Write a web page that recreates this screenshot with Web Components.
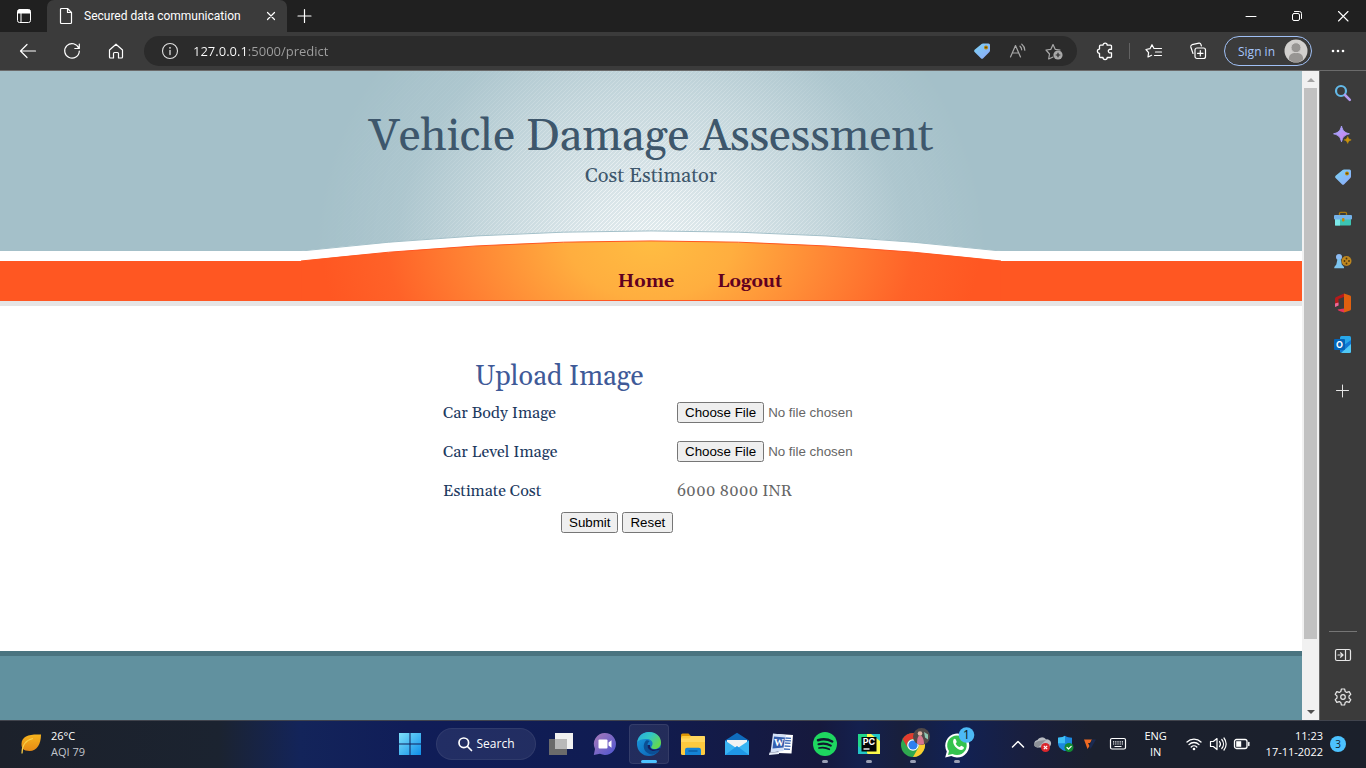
<!DOCTYPE html>
<html lang="en">
<head>
<meta charset="utf-8">
<meta name="viewport" content="width=device-width, initial-scale=1">
<title>Secured data communication</title>
<style>
  html, body { margin: 0; height: 100%; }
  body { overflow: hidden; font-family: "Noto Sans", "Open Sans", sans-serif; }
</style>
</head>
<body>
<desktop-shell>
  <edge-browser>
    <tab-strip slot="tabs" label="Secured data communication"></tab-strip>
    <browser-toolbar slot="toolbar"></browser-toolbar>
    <web-viewport slot="page">
      <site-header heading="Vehicle Damage Assessment" tagline="Cost Estimator">
        <nav-link href="#home">Home</nav-link>
        <nav-link href="#logout">Logout</nav-link>
      </site-header>
      <upload-form></upload-form>
      <site-footer></site-footer>
    </web-viewport>
    <side-bar slot="side"></side-bar>
  </edge-browser>
  <task-bar></task-bar>
</desktop-shell>

<script>
const line = 'fill="none" stroke="currentColor" stroke-linecap="round" stroke-linejoin="round"';

/* name: [width, height, markup] */
const ICONS = {
  tabs: [16, 16, `<g ${line}><rect x="1.5" y="1.5" width="13" height="13" rx="2"/><path d="M5 5v9"/></g><path d="M1.5 3.5a2 2 0 0 1 2-2h9a2 2 0 0 1 2 2V5.500h-13z" fill="currentColor"/>`],
  doc: [14, 18, `<g ${line} stroke-width="1.2"><path d="M1.500 2.500a1 1 0 0 1 1-1H8.500l4 4v10a1 1 0 0 1-1 1h-9a1 1 0 0 1-1-1z"/><path d="M8.500 1.500v4h4"/></g>`],
  close: [12, 12, `<path d="M2.500 2.500l7 7M9.500 2.500l-7 7" ${line} stroke-width="1.2"/>`],
  plus: [16, 16, `<path d="M7.500 1.500v13M1 8h13" ${line} stroke-width="1.2"/>`],
  plusThin: [14, 14, `<path d="M6.500 1v12M.5 6.500h12" ${line}/>`],
  min: [12, 12, `<path d="M1 6.500h10" ${line}/>`],
  restore: [12, 12, `<g ${line}><rect x="1.500" y="3.500" width="7" height="7" rx="1.500"/><path d="M3.500 1.500h5a2 2 0 0 1 2 2v5"/></g>`],
  winClose: [12, 12, `<path d="M1.500 1.500l9.500 9.500M11 1.500L1.500 11" ${line} stroke-width="1.100"/>`],
  back: [18, 16, `<path d="M1.500 8H16.500M8 1.500L1.500 8 8 14.500" ${line} stroke-width="1.200"/>`],
  reload: [18, 18, `<path d="M15.800 6.200A7.300 7.300 0 1 0 16.300 9M16.300 2v4.500h-4.500" ${line} stroke-width="1.200"/>`],
  home: [16, 16, `<path d="M1.500 7L8 1.200 14.500 7v7a1 1 0 0 1-1 1H10.500V10.500a1 1 0 0 0-1-1h-3a1 1 0 0 0-1 1V15h-3a1 1 0 0 1-1-1z" ${line} stroke-width="1.200"/>`],
  info: [18, 18, `<circle cx="9" cy="9" r="7.500" ${line} stroke-width="1.100"/><path d="M9 8.500v4" ${line} stroke-width="1.300"/><circle cx="9" cy="5.800" r=".9" fill="currentColor"/>`],
  tag: [18, 18, `<defs><linearGradient id="g" x1="0" y1="0" x2="1" y2="1"><stop offset="0" stop-color="#7bd3f2"/><stop offset="1" stop-color="#8ea8fb"/></linearGradient></defs><path d="M10 1.500h5.500a1.500 1.500 0 0 1 1.500 1.500v5.500a2 2 0 0 1-.6 1.400l-6.200 6.300a1.600 1.600 0 0 1-2.300 0L1.600 10.100a1.600 1.600 0 0 1 0-2.300l7-5.700A2.200 2.200 0 0 1 10 1.500z" fill="url(#g)"/><circle cx="13" cy="5.500" r="2" fill="#b88600"/><circle cx="13" cy="5.500" r=".8" fill="#4e3b12"/>`],
  readAloud: [18, 16, `<g ${line} stroke-width="1.200"><path d="M1.500 14L6.500 2.500 11.500 14M3.200 10h6.600"/><path d="M11 3.200a5 5 0 0 1 1.700 3.600M12.800 1.200a8 8 0 0 1 3 6"/></g>`],
  starAdd: [19, 18, `<path d="M8 15l-4.300 2 .8-5L1 8l4.900-.7L8 2.500l2.200 4.800L15 8" ${line} stroke-width="1.200"/><circle cx="13" cy="13" r="4.600" fill="#a8a8a8"/><path d="M13 10.700v4.600M10.700 13h4.600" stroke="#2b2b2b" stroke-width="1.200"/>`],
  puzzle: [18, 18, `<path d="M4.500 3.200H7a2.100 2.100 0 0 1 4.200 0h3.300a1 1 0 0 1 1 1v3.100h-1a1.800 1.800 0 1 0 0 3.500h1v3.700a1 1 0 0 1-1 1h-3.300a2.100 2.100 0 0 1-4.200 0H4.500a1 1 0 0 1-1-1v-3.200a2.100 2.100 0 0 1 0-4.200V4.200a1 1 0 0 1 1-1z" ${line} stroke-width="1.300"/>`],
  favs: [18, 16, `<path d="M6.600 12.300L3 14l.6-4.300L1 6.500l4-.8L7 1.700l2 3.800h7.500M10.500 9h6M9.500 12.500h7" ${line} stroke-width="1.200"/>`],
  collections: [18, 18, `<g ${line} stroke-width="1.200"><path d="M4 11.500L1.800 5A2 2 0 0 1 3 2.700l7-1.500a1.700 1.700 0 0 1 1.900 1.200l.5 1.600"/><rect x="6" y="6" width="10.500" height="10.500" rx="2"/><path d="M11.300 8.500v5.500M8.500 11.300h5.500"/></g>`],
  dots: [14, 4, `<g fill="currentColor"><circle cx="2" cy="2" r="1.300"/><circle cx="7" cy="2" r="1.300"/><circle cx="12" cy="2" r="1.300"/></g>`],
  avatar: [24, 24, `<circle cx="12" cy="12" r="11.500" fill="#d2d0ce"/><path d="M4.800 20.500c0-5 2.500-6.500 7.200-6.500s7.200 1.500 7.200 6.500a11 11 0 0 1-14.400 0z" fill="#979593"/><circle cx="12" cy="8.700" r="5" fill="#979593" stroke="#d2d0ce"/>`],
  sbSearch: [18, 18, `<circle cx="7" cy="7" r="5" fill="none" stroke="#63b9e8" stroke-width="2.200"/><path d="M11 11l4.800 4.800" stroke="#b49bf0" stroke-width="2.600" stroke-linecap="round"/>`],
  sparkle: [18, 18, `<defs><linearGradient id="g" x1="0" y1="0" x2="1" y2="1"><stop offset="0" stop-color="#8cb8ff"/><stop offset=".6" stop-color="#c58cf5"/></linearGradient></defs><path d="M7.500 0c1.300 5 2.900 6.600 7.900 7.800-5 1.300-6.600 2.900-7.900 7.900C6.200 10.700 4.600 9.100-.4 7.800 4.600 6.600 6.200 5 7.500 0z" fill="url(#g)" stroke="#a99cf5" stroke-width="1"/><path d="M13.700 10.500c.7 2.200 1.300 2.800 3.500 3.400-2.200.7-2.800 1.300-3.500 3.500-.7-2.200-1.300-2.800-3.500-3.500 2.200-.6 2.800-1.200 3.500-3.400z" fill="#c8920c" stroke="#c8920c" stroke-width=".6"/>`],
  toolbox: [18, 16, `<path d="M5.500 4V2.500A1.200 1.200 0 0 1 6.700 1.300h4.600a1.200 1.200 0 0 1 1.200 1.200V4" fill="none" stroke="#a9790d" stroke-width="1.300"/><rect x="1" y="7.500" width="16" height="7" rx="1" fill="#3cc5b4"/><rect x="1" y="7.500" width="5" height="7" fill="#7ce8e8"/><rect x="0" y="4" width="18" height="4.500" rx="1" fill="#74b2e9"/><rect x="8" y="7" width="2.500" height="3.500" rx="1" fill="#c08a10"/>`],
  chess: [18, 16, `<circle cx="12.500" cy="8" r="5" fill="#bd861e"/><g fill="#4b3512"><circle cx="12.500" cy="5.500" r=".9"/><circle cx="15" cy="8" r=".9"/><circle cx="12.500" cy="10.500" r=".9"/><circle cx="10.500" cy="8" r=".9"/></g><circle cx="5" cy="4" r="3" fill="#8cbcf4"/><path d="M3.500 6h3.200l1.100 5.500L10 14v1.300H.3V14l2-2.500z" fill="#7cc4ee"/>`],
  office: [18, 20, `<path d="M10 .5L16 2.500a1.500 1.500 0 0 1 1 1.500v12a1.500 1.500 0 0 1-1 1.500l-6 2z" fill="#e0600f"/><path d="M10 .5L2.300 4A2 2 0 0 0 1 6v8l3.500-1.500V6L10 4z" fill="#b51b1b"/><path d="M1 10.500V14l3.500-1.500v-3z" fill="#e86a9a"/><path d="M3.500 16.500L10 15.500v4l-5.300-1.800z" fill="#e8335b"/>`],
  outlook: [18, 18, `<path d="M6 1.500A1.500 1.500 0 0 1 7.500 0h8A1.500 1.500 0 0 1 17 1.500V9H6z" fill="#28a8ea"/><path d="M6 8h5.500L17 4v12.500H6z" fill="#0f78d4"/><path d="M17 8v7.500a1.500 1.500 0 0 1-1.500 1.500H7z" fill="#50c8f5"/><rect x="0" y="3" width="11" height="11" rx="1" fill="#0364b8"/><text x="5.500" y="12" text-anchor="middle" font-family="Inter, sans-serif" font-size="9" font-weight="700" fill="#fff">O</text>`],
  panel: [18, 14, `<g ${line} stroke-width="1.200"><rect x="1.500" y="1.500" width="15" height="11" rx="1.500"/><path d="M11.500 1.500v11M4 7h4.500M6.500 4.800L9 7 6.500 9.200"/></g>`],
  gear: [18, 18, `<g ${line} stroke-width="1.200"><circle cx="9" cy="9" r="2.300"/><path d="M7.400 1h3.200l.6 2.500 1.500.9 2.500-.8 1.600 2.800L15 8v2l1.800 1.600-1.600 2.800-2.500-.8-1.500.9-.6 2.500H7.400l-.6-2.500-1.500-.9-2.500.8-1.600-2.800L3 10V8L1.200 6.400l1.600-2.800 2.500.8 1.500-.9z"/></g>`],
  leaf: [22, 22, `<defs><linearGradient id="g" x1="0" y1="0" x2="0" y2="1"><stop offset="0" stop-color="#f7b51e"/><stop offset="1" stop-color="#e68a14"/></linearGradient></defs><path d="M21 1.500C10 1 1.500 2.500 1.500 11c0 2 .4 3.200 1 4.500 1.800 1.800 4 2.500 7 2.500C17 18 21 11 21 1.500z" fill="url(#g)"/><path d="M2 20.500C2 12 6 7 13 5.500" fill="none" stroke="#f9d04a" stroke-width="1.200"/>`],
  start: [24, 24, `<defs><linearGradient id="g" x1="0" y1="0" x2="1" y2="1"><stop offset="0" stop-color="#7fe0fb"/><stop offset="1" stop-color="#0e8ee9"/></linearGradient></defs><path d="M1 1h10.500v10.500H1zM12.500 1H23v10.500H12.500zM1 12.500h10.500V23H1zM12.500 12.500H23V23H12.500z" fill="url(#g)"/>`],
  search: [16, 16, `<circle cx="6.800" cy="6.800" r="4.800" ${line} stroke-width="1.700"/><path d="M10.500 10.500l4 4" ${line} stroke-width="1.700"/>`],
  taskview: [26, 24, `<rect x="1" y="7" width="18" height="16" fill="#6b6b6b"/><rect x="7" y="1" width="18" height="16" fill="#f1f1f1"/><rect x="7" y="7" width="12" height="10" fill="#b9b9b9"/>`],
  chat: [24, 24, `<defs><linearGradient id="g" x1="0" y1="0" x2="1" y2="1"><stop offset="0" stop-color="#a97ab8"/><stop offset="1" stop-color="#4c55d2"/></linearGradient></defs><path d="M12 1a11 11 0 1 1-5 20.800L.8 23 2 17A11 11 0 0 1 12 1z" fill="url(#g)"/><rect x="5.500" y="7.500" width="9" height="9" rx="1" fill="#fff"/><path d="M15.500 10.500l3-2.200v7.400l-3-2.200z" fill="#fff"/>`],
  edge: [26, 26, `<defs><linearGradient id="g" x1="0" y1="0" x2="1" y2=".6"><stop offset="0" stop-color="#2aa9e0"/><stop offset=".5" stop-color="#32c6c4"/><stop offset="1" stop-color="#65d84d"/></linearGradient><linearGradient id="b" x1="0" y1="0" x2="1" y2="1"><stop offset="0" stop-color="#1b9de2"/><stop offset="1" stop-color="#0a5cad"/></linearGradient></defs><circle cx="13" cy="13" r="12" fill="url(#b)"/><path d="M1.200 11C2.500 4.500 7 1 13 1c7 0 12 4.500 12 10.500 0 4-2.800 6.500-6.300 6.500-2.700 0-4.200-1.200-3.200-2.500 2.500-3.500.5-7-4-7.500C7 7.500 3 8.500 1.200 11z" fill="url(#g)"/><path d="M10 9.500c-3.800 4-3 11 3.500 13.500 4.500 1.500 8-.8 10-4.200-7 3.200-12.500-.3-12-4.800 0-2 1-3 2-3.800-1-.9-2-1.200-3.500-.7z" fill="#0b4f94"/><path d="M11.500 14c-.5 5 5 8 12.500 4.600.6-1-.2-1.500-1-1.100-6 2.500-9.500.5-9-3.500z" fill="#141f60"/>`],
  folder: [26, 24, `<path d="M1 3a1.500 1.500 0 0 1 1.500-1.500h6L11 4v4H1z" fill="#dc9505"/><rect x="1" y="4" width="24" height="19" rx="1.500" fill="#fdca3f"/><path d="M1 6.500L9.500 6.500 11 4h13a1 1 0 0 1 1 1v5H1z" fill="#ffd75e"/><path d="M5 23v-5a2.200 2.200 0 0 1 2.200-2.200h11.600A2.200 2.200 0 0 1 21 18v5z" fill="#1483d6"/><path d="M8.500 19h9" stroke="#0a5ea6" stroke-width="1.500"/>`],
  mail: [26, 24, `<path d="M1 8.500L13 .8l12 7.700v5H1z" fill="#0f6cbd"/><path d="M3 8h20v8H3z" fill="#f2f2f2"/><path d="M1 8.500l12 8 12-8V23H1z" fill="#39b4f3"/><path d="M1 23L13 14l12 9z" fill="#1f97e6"/>`],
  word: [26, 24, `<path d="M10 2l15 1-1.500 18.500-13-.5z" fill="#fff"/><path d="M17 6l6 .3M17 8.500l6 .3M16.500 11l6 .3M16.500 14l6 .3M16 17l6 .3" stroke="#3f6dba" stroke-width="1.300"/><path d="M5 1.500L18 3 15.500 19 2.500 20.500z" fill="#d5e1f6"/><path d="M6 4.500L17 5.500 15.500 15.500 4.500 16.500z" fill="#345eae"/><text x="11" y="14" text-anchor="middle" font-family="Liberation Serif, serif" font-size="10" font-weight="700" fill="#fff">W</text><path d="M1.500 20.500L11 20v2L1 23z" fill="#e6ecf7"/>`],
  spotify: [26, 26, `<circle cx="13" cy="13" r="12" fill="#1ed760"/><g fill="none" stroke="#10182e" stroke-linecap="round"><path d="M6 9.200c5-1.500 10-1 14.200 1.300" stroke-width="2.500"/><path d="M6.500 13.300c4.500-1.300 8.500-.8 12.300 1.300" stroke-width="2.100"/><path d="M7 17c4-1 7-.5 10.300 1.300" stroke-width="1.700"/></g>`],
  pycharm: [24, 24, `<path d="M1 2h12v20H1z" fill="#21d789"/><path d="M10 2h13v20H10z" fill="#fcf84a"/><path d="M1 14l10 8H1zM14 2h9v7z" fill="#22c5c8"/><rect x="4.500" y="5" width="15" height="14.500" fill="#050505"/><text x="12" y="13" text-anchor="middle" font-family="Inter, sans-serif" font-size="9" font-weight="700" fill="#fff">PC</text><path d="M6.500 17h6" stroke="#fff" stroke-width="1.400"/>`],
  chrome: [28, 30, `<circle cx="14" cy="16" r="12" fill="#2fa84f"/><path d="M3.600 10a12 12 0 0 1 20.800 0H14a6 6 0 0 0-5.200 9z" fill="#e33b2e"/><path d="M24.400 10A12 12 0 0 1 14 28l5.200-9A6 6 0 0 0 14 10z" fill="#fccd30"/><circle cx="14" cy="16" r="5.800" fill="#fff"/><circle cx="14" cy="16" r="4.600" fill="#2d7ff0"/><circle cx="22.500" cy="7.500" r="8.500" fill="#514948"/><path d="M18 14.500c0-5 1-8 3-8s4 3 4 8.500c-2.500 1.200-5 1-7-.5z" fill="#d9748c"/><circle cx="21" cy="4.500" r="2.300" fill="#e1b6a4"/><path d="M25 3l4 2.500v5l-3-2z" fill="#8fc8b4"/>`],
  whatsapp: [28, 30, `<path d="M2.200 28.500l1.600-6A12 12 0 1 1 8.300 27z" fill="#fff"/><path d="M5 26l1-4A9.800 9.800 0 1 1 9.500 25z" fill="#35c34e"/><path d="M10.500 10.500c1-1.200 2-.8 2.500.5l.7 1.700c.2.600-1 1.500-1 1.800.8 1.700 2 2.800 3.800 3.600.5.200 1.400-1.500 1.900-1.300l2.200 1.100c.6.300.3 1.800-.4 2.400-3.700 3.100-12-4.500-9.700-9.800z" fill="#fff"/><circle cx="23.500" cy="6" r="7.800" fill="#4cb9f5"/><text x="23.500" y="10" text-anchor="middle" font-family="Noto Sans, sans-serif" font-size="12" fill="#122">1</text>`],
  chevron: [16, 16, `<path d="M2.500 11L8 5.500 13.500 11" ${line} stroke-width="1.500"/>`],
  cloud: [18, 18, `<path d="M4.500 12.500a3.800 3.800 0 0 1 0-7.500 5 5 0 0 1 8.500-.5 4 4 0 0 1 2 8z" fill="#b9bcc2"/><path d="M1 10c1-4 5-4.500 12-5l-8 7.500C2.500 12.500 1.200 11.500 1 10z" fill="#8d9198"/><circle cx="12.500" cy="12.500" r="4.500" fill="#d9262c"/><path d="M10.800 10.800l3.400 3.400M14.200 10.800l-3.400 3.400" stroke="#fff" stroke-width="1.200"/>`],
  shield: [18, 18, `<path d="M8 .8c2.300 1.400 4.500 1.900 7 2V8c0 4-2.800 6.500-7 8-4.200-1.500-7-4-7-8V2.800c2.500-.1 4.700-.6 7-2z" fill="#1b88df"/><path d="M8 .8v7.400H1V2.800c2.500-.1 4.700-.6 7-2z" fill="#3fc0f4"/><circle cx="12" cy="12.500" r="4.500" fill="#118a32"/><path d="M10 12.500l1.500 1.500 2.700-2.700" ${line} stroke-width="1.200"/>`],
  vpn: [16, 16, `<path d="M2 3.500h8L8 7H6l1.500 3-2 3z" fill="#f06a22"/><path d="M10 3.500h4L8.500 13l-1-3z" fill="#1a2a52"/>`],
  keyboard: [18, 14, `<rect x="1.500" y="1.500" width="15" height="10.500" rx="1.500" ${line} stroke-width="1.200"/><path d="M4 4.800h10M4 7h10" stroke="currentColor" stroke-width="1.200" stroke-dasharray="1.200 1"/><path d="M5.500 9.500h7" stroke="currentColor"/>`],
  wifi: [16, 14, `<g ${line} stroke-width="1.300"><path d="M1 5a10 10 0 0 1 14 0M3 7.600a7 7 0 0 1 10 0M5.200 10a4 4 0 0 1 5.600 0"/></g><circle cx="8" cy="12" r="1.300" fill="currentColor"/>`],
  volume: [18, 16, `<g ${line} stroke-width="1.200"><path d="M1.500 5.500v5h2.800L8 13.500v-11L4.300 5.500zM10.500 5.500a4 4 0 0 1 0 5M12.800 3.500a7 7 0 0 1 0 9M15 2a9.500 9.500 0 0 1 0 12"/></g>`],
  battery: [18, 12, `<rect x="1.500" y="1.500" width="12.500" height="9" rx="2" ${line} stroke-width="1.300"/><rect x="3.200" y="3.200" width="5" height="5.600" fill="currentColor"/><path d="M15.800 4.500v3" ${line} stroke-width="1.500"/>`],
  up: [8, 6, `<path d="M0 5h8L4 1z" fill="currentColor"/>`],
  down: [8, 6, `<path d="M0 1h8L4 5z" fill="currentColor"/>`]
};

const RESET = `
  :host, *, *::before { box-sizing: border-box; }
  button { font: inherit; color: inherit; background: none; border: 0; margin: 0; padding: 0;
    display: flex; align-items: center; justify-content: center; }
`;

class Base extends HTMLElement {
  connectedCallback() {
    if (this.shadowRoot) return;
    this.attachShadow({ mode: 'open' }).innerHTML =
      `<style>${RESET}${this.css()}</style>${this.html()}`;
  }
  css() { return ':host { display: block; }'; }
  html() { return '<slot></slot>'; }
}
const define = (name, css, html) => customElements.define(name, class extends Base {
  css() { return css; }
  html() { return typeof html === 'function' ? html(this) : html; }
});

define('ui-icon', `:host { display: inline-flex; flex: none; } svg { display: block; overflow: visible; }`, el => {
  const [w, h, art] = ICONS[el.getAttribute('name')];
  return `<svg width="${w}" height="${h}" viewBox="0 0 ${w} ${h}" aria-hidden="true">${art}</svg>`;
});

define('desktop-shell', `
  :host { display: grid; grid-template-rows: minmax(0, 1fr) 48px; height: 100vh; }
`, '<slot></slot>');

define('edge-browser', `
  :host { display: grid; grid-template-rows: 32px 38px minmax(0, 1fr); background: #3b3b3b; color: #fff; }
  main { display: grid; grid-template-columns: minmax(0, 1fr) 47px; min-height: 0; border-top: 1px solid #6b6b6b; }
`, `<slot name="tabs"></slot><slot name="toolbar"></slot>
<main><slot name="page"></slot><slot name="side"></slot></main>`);

define('tab-strip', `
  :host { display: flex; background: #202020; }
  .menu { width: 47px; }
  .tab { display: flex; align-items: center; width: 240px; padding: 0 10px 0 12px; background: #3b3b3b; border-radius: 7px 7px 0 0; }
  .tab span { flex: 1; margin-left: 11px; white-space: nowrap; font: 12px Roboto, sans-serif; }
  .new { width: 36px; }
  .window { display: flex; margin-left: auto; }
  .window button { width: 46px; }
`, el => `
<button class="menu" aria-label="Tab actions"><ui-icon name="tabs"></ui-icon></button>
<div class="tab"><ui-icon name="doc"></ui-icon><span>${el.getAttribute('label')}</span>
  <button aria-label="Close tab"><ui-icon name="close"></ui-icon></button></div>
<button class="new" aria-label="New tab"><ui-icon name="plus"></ui-icon></button>
<div class="window">
  <button aria-label="Minimize"><ui-icon name="min"></ui-icon></button>
  <button aria-label="Restore"><ui-icon name="restore"></ui-icon></button>
  <button aria-label="Close"><ui-icon name="winClose"></ui-icon></button>
</div>`);

define('browser-toolbar', `
  :host { display: flex; align-items: center; padding: 0 6px; }
  .tool { width: 44px; height: 30px; }
  .address { display: flex; align-items: center; flex: 1; height: 30px; margin: 0 6px; padding: 0 5px 0 17px; background: #2b2b2b; border-radius: 15px; color: #a8a8a8; }
  .address ui-icon[name=info] { color: #e0e0e0; }
  input { flex: 1; min-width: 0; margin: 0 0 0 14px; padding: 0; border: 0; outline: 0; height: 24px;
    font: 13px "Open Sans", sans-serif; color: #fff;
    background: linear-gradient(90deg, #fff 54px, #a0a0a0 54px); -webkit-background-clip: text; background-clip: text; -webkit-text-fill-color: transparent; }
  .address button { width: 36px; height: 30px; }
  i { width: 1px; height: 16px; background: #626262; margin: 0 2px; }
  .sign { height: 30px; padding: 0 3px 0 13px; gap: 9px; border: 1px solid #a0c0f5; border-radius: 15px; color: #a6c5fa; font: 12px "Open Sans", sans-serif; margin: 0 4px; white-space: nowrap; }
`, `
<button class="tool" aria-label="Back"><ui-icon name="back"></ui-icon></button>
<button class="tool" aria-label="Refresh"><ui-icon name="reload"></ui-icon></button>
<button class="tool" aria-label="Home"><ui-icon name="home"></ui-icon></button>
<div class="address">
  <ui-icon name="info"></ui-icon>
  <input type="text" aria-label="Address" value="127.0.0.1:5000/predict">
  <button aria-label="Shopping"><ui-icon name="tag"></ui-icon></button>
  <button aria-label="Read aloud"><ui-icon name="readAloud"></ui-icon></button>
  <button aria-label="Add to favorites"><ui-icon name="starAdd"></ui-icon></button>
</div>
<button class="tool" aria-label="Extensions"><ui-icon name="puzzle"></ui-icon></button><i></i>
<button class="tool" aria-label="Favorites"><ui-icon name="favs"></ui-icon></button>
<button class="tool" aria-label="Collections"><ui-icon name="collections"></ui-icon></button>
<button class="sign">Sign in<ui-icon name="avatar"></ui-icon></button>
<button class="tool" aria-label="Settings and more"><ui-icon name="dots"></ui-icon></button>`);

define('web-viewport', `
  :host { display: grid; grid-template-columns: minmax(0, 1fr) 17px; min-height: 0; overflow: hidden; background: #fff; }
  .page { display: flex; flex-direction: column; min-height: 0; overflow: hidden; }
  .bar { display: flex; flex-direction: column; align-items: center; background: #f1f1f1; color: #505050; }
  .bar ui-icon { height: 17px; align-items: center; }
  .bar ui-icon:first-child { color: #a3a3a3; }
  .track { flex: 1; width: 13px; }
  .thumb { height: calc(100% - 64px); background: #c1c1c1; }
`, `
<div class="page"><slot></slot></div>
<div class="bar"><ui-icon name="up"></ui-icon><div class="track"><div class="thumb"></div></div><ui-icon name="down"></ui-icon></div>`);

define('site-header', `
  :host { display: grid; flex: none; justify-items: center; border-bottom: 5px solid #e5e5e5;
    background: linear-gradient(#a4c0c9 180px, #fff 180px, #fff 190px, #ff5722 190px);
    font-family: Georgia, Gelasio, "Liberation Serif", serif; }
  svg, .content { grid-area: 1 / 1; }
  svg { display: block; }
  .content { display: grid; grid-template-rows: 135px 1fr; justify-items: center; width: 100%; height: 230px; color: #3e576c; }
  hgroup { margin: 0; padding-top: 37px; text-align: center; }
  h1 { margin: 0; font-weight: 400; font-size: 45px; line-height: 58px; white-space: nowrap; }
  p { margin: 0; font-size: 20px; line-height: 20px; }
  nav { display: flex; align-self: end; gap: 43px; padding: 0 0 7px 98px; }
`, el => `
<svg width="700" height="230" viewBox="0 0 700 230" aria-hidden="true">
  <defs>
    <radialGradient id="light" gradientUnits="userSpaceOnUse" cx="350" cy="190" r="340">
      <stop offset="0" stop-color="#fff"/><stop offset=".2" stop-color="#d8d8d8"/><stop offset=".5" stop-color="#808080"/><stop offset=".75" stop-color="#262626"/><stop offset="1" stop-color="#000"/>
    </radialGradient>
    <radialGradient id="sun" gradientUnits="userSpaceOnUse" cx="350" cy="170" r="330" gradientTransform="translate(0 51) scale(1 .7)">
      <stop offset="0" stop-color="#ffbd42"/><stop offset=".25" stop-color="#ffae3f"/><stop offset=".55" stop-color="#ff8434"/><stop offset=".8" stop-color="#ff6228"/><stop offset="1" stop-color="#ff5722"/>
    </radialGradient>
    <pattern id="hatch" width="4" height="4" patternUnits="userSpaceOnUse">
      <rect width="4" height="4" fill="#fff" fill-opacity=".7"/>
      <path d="M-1 5L5 -1M-1 1L1 -1M3 5L5 3" stroke="#fff" stroke-width="1"/>
    </pattern>
    <mask id="fade"><rect width="700" height="190" fill="url(#light)"/></mask>
  </defs>
  <rect width="700" height="190" fill="url(#hatch)" mask="url(#fade)"/>
  <path d="M0 180A3072 3072 0 0 1 700 180V190H0z" fill="#fff" stroke="#a4c0c9" stroke-width="1"/>
  <path d="M0 180v10H700V180z" fill="#fff"/>
  <path d="M0 190A3072 3072 0 0 1 700 190V229.500H0z" fill="url(#sun)" stroke="#ff5722"/>
</svg>
<div class="content">
  <hgroup><h1>${el.getAttribute('heading')}</h1><p>${el.getAttribute('tagline')}</p></hgroup>
  <nav aria-label="Main"><slot></slot></nav>
</div>`);

define('nav-link', `
  :host { display: block; }
  a { color: #600020; font-size: 18px; line-height: 24px; font-weight: 700; text-decoration: none; }
`, el => `<a href="${el.getAttribute('href')}"><slot></slot></a>`);

define('form-row', `
  :host { display: grid; grid-template-columns: 234px 1fr; align-items: center; min-height: 39px; white-space: nowrap; }
`, '<slot name="label"></slot><slot></slot>');

define('upload-form', `
  :host { display: block; flex: none; min-height: 345px; padding-top: 55px; background: #fff; color: #666;
    font-family: Georgia, Gelasio, "Liberation Serif", serif; font-size: 16px; }
  form { width: 416px; margin: 0 auto; }
  h2 { margin: 0; padding-left: 32px; font-weight: 400; font-size: 27px; line-height: 32px; color: #3f5a98; }
  label, .label { color: #1d3a5f; }
  input { width: 100%; color: #666; font-family: "Liberation Sans", Arial, sans-serif; }
  .actions { display: flex; gap: 4px; padding: 2px 0 0 118px; }
  .actions button { all: revert; font-family: "Liberation Sans", Arial, sans-serif; margin: 0; }
`, `
<form>
  <h2>Upload Image</h2>
  <form-row><label slot="label" for="body">Car Body Image</label><input type="file" id="body"></form-row>
  <form-row><label slot="label" for="level">Car Level Image</label><input type="file" id="level"></form-row>
  <form-row><span slot="label" class="label">Estimate Cost</span><output>6000 8000 INR</output></form-row>
  <div class="actions"><button type="submit">Submit</button><button type="reset">Reset</button></div>
</form>`);

define('site-footer', `:host { display: block; flex: 1; background: #61919f; border-top: 5px solid #4a7480; }`, '');

define('side-bar', `
  :host { display: flex; flex-direction: column; padding: 1px 0 2px; border-left: 1px solid #666; background: #3b3b3b; }
  button { height: 42px; width: 100%; color: #e6e6e6; }
  .add { margin-top: 4px; }
  .bottom { margin: auto 9px 0; border-top: 1px solid #757575; padding-top: 2px; }
`, `
${['sbSearch', 'sparkle', 'tag', 'toolbox', 'chess', 'office', 'outlook'].map((n, i) =>
  `<button aria-label="${['Search', 'Discover', 'Shopping', 'Tools', 'Games', 'Office', 'Outlook'][i]}"><ui-icon name="${n}"></ui-icon></button>`).join('')}
<button class="add" aria-label="Customize"><ui-icon name="plusThin"></ui-icon></button>
<div class="bottom">
  <button aria-label="Hide sidebar"><ui-icon name="panel"></ui-icon></button>
  <button aria-label="Settings"><ui-icon name="gear"></ui-icon></button>
</div>`);

define('task-app', `
  :host { display: block; }
  button { position: relative; width: 44px; height: 46px; }
  :host([active]) button::before { content: ""; position: absolute; inset: 3px 2px; background: #ffffff14; border: 1px solid #ffffff14; border-radius: 4px; }
  ui-icon { position: relative; }
  i { position: absolute; bottom: 4px; left: 19px; width: 6px; height: 3px; border-radius: 2px; background: #9aa0b5; }
  :host([active]) i { left: 14px; width: 16px; background: #4cc2ff; }
`, el => `<button aria-label="${el.getAttribute('label')}"><ui-icon name="${el.getAttribute('icon')}"></ui-icon>${el.hasAttribute('running') ? '<i></i>' : ''}</button>`);

define('task-bar', `
  :host { display: grid; grid-template-columns: 1fr auto 1fr; align-items: center; padding-bottom: 1px; border-top: 1px solid #41444d; color: #fff; font: 11px/16px "Open Sans", sans-serif;
    background: linear-gradient(90deg, #1c212b 0, #1b2330 16%, #13245a 22%, #101d58 30%, #101c52 45%, #16193d 60%, #14204e 63%, #181f3c 66%, #112155 70%, #191f3e 75%, #1b202e 80%, #1b202b 100%); }
  .weather { display: flex; align-items: center; gap: 9px; padding-left: 20px; justify-self: start; text-align: left; }
  .weather small { display: block; font-size: 11px; color: #c3c6cc; }
  .apps { display: flex; align-items: center; }
  .search { width: 100px; height: 32px; margin: 0 3px 0 4px; border-radius: 16px; gap: 4px; border: 1px solid #ffffff10; background: #ffffff14; font-size: 12px; }
  .tray { display: flex; align-items: center; justify-self: end; padding-right: 20px; text-align: right; }
  .tray button { width: 24px; height: 40px; }
  .tray .kb { width: 32px; }
  .tray .lang { width: 48px; padding-right: 4px; text-align: center; }
  .clock { white-space: nowrap; margin: 0 7px 0 12px; }
  .count { width: 16px; height: 16px; border-radius: 8px; background: #4cc2ff; color: #10202c; text-align: center; font-size: 10px; }
`, `
<button class="weather"><ui-icon name="leaf"></ui-icon><span>26°C<small>AQI 79</small></span></button>
<div class="apps">
  <task-app icon="start" label="Start"></task-app>
  <button class="search"><ui-icon name="search"></ui-icon>Search</button>
  <task-app icon="taskview" label="Task view"></task-app>
  <task-app icon="chat" label="Chat"></task-app>
  <task-app icon="edge" label="Microsoft Edge" active running></task-app>
  <task-app icon="folder" label="File Explorer"></task-app>
  <task-app icon="mail" label="Mail"></task-app>
  <task-app icon="word" label="Word"></task-app>
  <task-app icon="spotify" label="Spotify" running></task-app>
  <task-app icon="pycharm" label="PyCharm" running></task-app>
  <task-app icon="chrome" label="Chrome" running></task-app>
  <task-app icon="whatsapp" label="WhatsApp" running></task-app>
</div>
<div class="tray">
  <button aria-label="Hidden icons"><ui-icon name="chevron"></ui-icon></button>
  <button aria-label="OneDrive"><ui-icon name="cloud"></ui-icon></button>
  <button aria-label="Security"><ui-icon name="shield"></ui-icon></button>
  <button aria-label="VPN"><ui-icon name="vpn"></ui-icon></button>
  <button class="kb" aria-label="Touch keyboard"><ui-icon name="keyboard"></ui-icon></button>
  <button class="lang">ENG<br>IN</button>
  <button aria-label="Network"><ui-icon name="wifi"></ui-icon></button>
  <button aria-label="Volume"><ui-icon name="volume"></ui-icon></button>
  <button aria-label="Battery"><ui-icon name="battery"></ui-icon></button>
  <div class="clock">11:23<br>17-11-2022</div>
  <div class="count">3</div>
</div>`);
</script>
</body>
</html>
